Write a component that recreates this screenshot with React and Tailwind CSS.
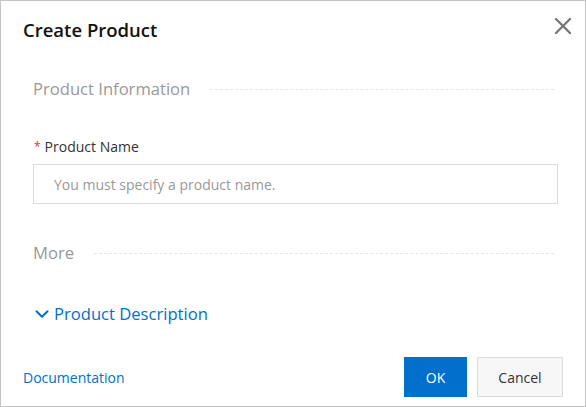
import React from "react";
import { X, ChevronDown } from "lucide-react";

const font = { fontFamily: '"Open Sans", "Noto Sans", sans-serif' };

const SectionTitle = ({ children }) => (
  <div className="flex items-center gap-5">
    <span className="text-[16.6px] text-[#999] leading-6">{children}</span>
    <div className="flex-1 border-t border-dashed border-[#e6e6e6] mr-[4px]" />
  </div>
);

const App = () => {
  return (
    <div
      className="w-[586px] h-[407px] bg-white border border-[#c4c4c4] flex flex-col relative"
      style={font}
    >
      <button className="absolute right-[8px] top-[11px] text-[#777]">
        <X size={28} strokeWidth={2} />
      </button>
      {/* header */}
      <div className="pl-[22px] pt-[17px]">
        <h2 className="text-[18.5px] font-semibold text-[#111] leading-6">
          Create Product
        </h2>
      </div>
      {/* body */}
      <div className="pl-[32px] pr-[27px] pt-[35px] flex-1">
        <SectionTitle>Product Information</SectionTitle>
        <div className="mt-[36px]">
          <label className="text-[14px] text-[#333] leading-5 flex items-center">
            <span className="text-[#e62e2e] mr-[4px] ml-[1px] text-[12px]">*</span>
            Product Name
          </label>
          <input
            className="mt-[7px] w-full h-[40px] border border-[#dcdcdc] px-[20px] text-[14px] outline-none placeholder:text-[#999]"
            placeholder="You must specify a product name."
            style={font}
          />
        </div>
        <div className="mt-[37px]">
          <SectionTitle>More</SectionTitle>
        </div>
        <div className="mt-[37px] flex items-center gap-[1px] text-[#0070cc]">
          <ChevronDown size={22} strokeWidth={2.2} className="-ml-[2px]" />
          <span className="text-[16.6px] leading-6">Product Description</span>
        </div>
      </div>
      {/* footer */}
      <div className="flex items-center justify-between pl-[22px] pr-[22px] pb-[9px]">
        <a className="text-[14px] text-[#0070cc]" href="#">
          Documentation
        </a>
        <div className="flex gap-[10px]">
          <button className="w-[63px] h-[40px] bg-[#0070cc] text-white text-[14px]">
            OK
          </button>
          <button className="w-[86px] h-[40px] bg-[#f7f7f7] border border-[#dcdcdc] text-[#333] text-[14px]">
            Cancel
          </button>
        </div>
      </div>
    </div>
  );
};

export default App;
